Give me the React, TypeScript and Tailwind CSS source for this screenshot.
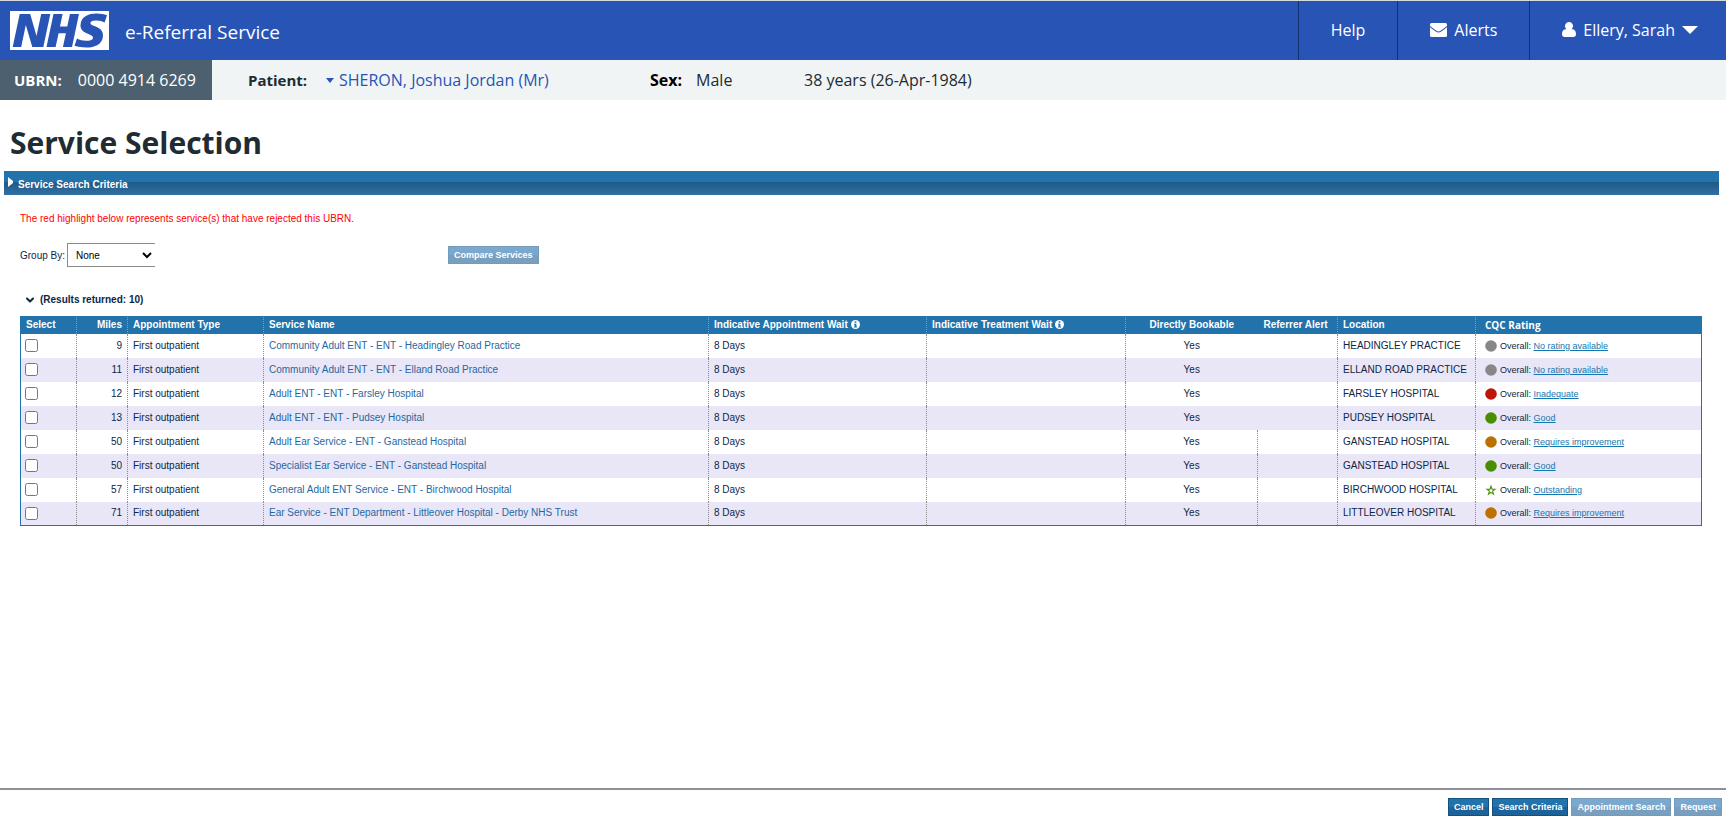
import { ChevronDown } from "lucide-react";

type Rating = "none" | "bad" | "good" | "improve" | "star";
type Row = { miles: number; name: string; location: string; rating: Rating };

const ratingLabels: Record<Rating, string> = {
  none: "No rating available",
  bad: "Inadequate",
  good: "Good",
  improve: "Requires improvement",
  star: "Outstanding",
};

const ratingColours: Record<Rating, string> = {
  none: "text-[#878787]",
  bad: "text-[#c01407]",
  good: "text-[#478f00]",
  improve: "text-[#bd7000]",
  star: "text-[#478f00]",
};

const rows: Row[] = [
  { miles: 9, name: "Community Adult ENT - ENT - Headingley Road Practice", location: "HEADINGLEY PRACTICE", rating: "none" },
  { miles: 11, name: "Community Adult ENT - ENT - Elland Road Practice", location: "ELLAND ROAD PRACTICE", rating: "none" },
  { miles: 12, name: "Adult ENT - ENT - Farsley Hospital", location: "FARSLEY HOSPITAL", rating: "bad" },
  { miles: 13, name: "Adult ENT - ENT - Pudsey Hospital", location: "PUDSEY HOSPITAL", rating: "good" },
  { miles: 50, name: "Adult Ear Service - ENT - Ganstead Hospital", location: "GANSTEAD HOSPITAL", rating: "improve" },
  { miles: 50, name: "Specialist Ear Service - ENT - Ganstead Hospital", location: "GANSTEAD HOSPITAL", rating: "good" },
  { miles: 57, name: "General Adult ENT Service - ENT - Birchwood Hospital", location: "BIRCHWOOD HOSPITAL", rating: "star" },
  { miles: 71, name: "Ear Service - ENT Department - Littleover Hospital - Derby NHS Trust", location: "LITTLEOVER HOSPITAL", rating: "improve" },
];

function RatingIcon({ rating }: { rating: Rating }) {
  return (
    <svg viewBox="0 0 12 12" className={`size-3 shrink-0 ${ratingColours[rating]}`} aria-hidden="true">
      {rating === "star" ? (
        <path
          d="M6 2.200 7 5.100 10 5.200 7.600 7.100 8.500 10.200 6 8.400 3.500 10.200 4.400 7.100 2 5.200 5 5.100Z"
          fill="none"
          stroke="currentColor"
          strokeWidth="1.1"
        />
      ) : (
        <circle cx="6" cy="6" r="5.8" fill="currentColor" />
      )}
    </svg>
  );
}

function InfoIcon() {
  return (
    <svg viewBox="0 0 10 10" className="ml-[3px] inline-block size-[9px] align-[-1px]" aria-hidden="true">
      <circle cx="5" cy="5" r="5" fill="#fff" />
      <path d="M4 1.500h2v1.600H4zM3.400 4.100H6v3.200h.7v1.100H3.300V7.300H4V5.200h-.6z" fill="#2272ab" />
    </svg>
  );
}

function EnvelopeIcon() {
  return (
    <svg viewBox="0 0 17 14" className="h-[14px] w-[17px]" aria-hidden="true">
      <rect width="17" height="14" rx="1.500" fill="currentColor" />
      <path d="M0 3.500C3 6 6.500 9 8.500 9S14 6 17 3.500" fill="none" stroke="#2854b5" strokeWidth="1.100" />
    </svg>
  );
}

function UserIcon() {
  return (
    <svg viewBox="0 0 14 15" className="h-[15px] w-[14px]" aria-hidden="true">
      <path
        d="M7 0a3.900 3.900 0 0 1 3.500 5.800c-.2.500-.5.900-.8 1.200C12.600 7 14 9.200 14 12c0 2-1 3-2.700 3H2.700C1 15 0 14 0 12 0 9.200 1.400 7 4.300 7c-.3-.3-.6-.7-.8-1.200A3.900 3.900 0 0 1 7 0Z"
        fill="currentColor"
      />
    </svg>
  );
}

function NhsLogo() {
  return (
    <span className="flex h-[39px] w-[99px] items-center justify-center overflow-hidden bg-white">
      <svg viewBox="0 0 99 39" className="h-[39px] w-[99px]" role="img" aria-label="NHS">
        <g fill="#2854b5">
          <path d="M9.700 3H20.200L26.500 25 31.200 3H40.300L33.300 36H22.300L15.800 14 11.200 36H2.700Z" />
          <path d="M43.500 3H52.600L50 15.500H57.300L59.900 3H69L62 36H52.900L55.900 22.300H48.600L45.600 36H36.500Z" />
          <path d="M97 4.300 94.600 11.500C92.500 10.400 89.500 9.600 86.500 9.600 83 9.600 80.500 10.200 80.500 12.200 80.500 15.700 93 14.700 93 24.200 93 33.500 84.500 36.500 76.500 36.500 72 36.500 68 35.900 64.500 34.800L67 27.600C69.500 29 73 29.800 76 29.800 79.500 29.800 83 29.200 83 26.500 83 22.500 70.500 23.300 70.500 14.500 70.500 5.500 78.500 2.500 86.500 2.500 90.500 2.500 94 3.200 97 4.300Z" />
        </g>
      </svg>
    </span>
  );
}

const head = "border-l border-dotted border-[#8f9aa5] px-[5px] font-bold";
const cell = "border-l border-dotted border-[#8c8c8c] px-[5px]";
const action = "h-[18px] border px-[5px] text-[9px] leading-4 font-bold text-white";
const strong = "border-[#15507f] bg-linear-to-b from-[#2272ab] from-50% to-[#1e629a] to-50%";
const faded = "border-[#759bb9] bg-linear-to-b from-[#7aa8cf] from-50% to-[#799fc0] to-50%";

export default function App() {
  return (
    <div className="flex min-h-screen flex-col bg-white font-['Liberation_Sans',Arial,sans-serif] text-[10px] text-[#0b2748]">
      <header className="flex h-[60px] border-t border-[#d5dce0] bg-[#2854b5] font-['Open_Sans','Noto_Sans',sans-serif] text-white">
        <div className="flex items-center gap-4 pl-[10px]">
          <NhsLogo />
          <span className="pt-1 text-[19px]">e-Referral Service</span>
        </div>
        <nav className="ml-auto flex text-base">
          <a href="#help" className="flex items-center border-l border-[#14306e] px-8 pb-[2px]">Help</a>
          <a href="#alerts" className="flex items-center gap-[7px] border-l border-[#14306e] px-8 pb-[2px]">
            <EnvelopeIcon />
            Alerts
          </a>
          <button type="button" className="flex items-center gap-[7px] border-l border-[#14306e] pr-7 pb-[2px] pl-8">
            <UserIcon />
            Ellery, Sarah
            <svg viewBox="0 0 16 8" className="h-2 w-4" aria-hidden="true">
              <path d="M0 0H16L8 8Z" fill="currentColor" />
            </svg>
          </button>
        </nav>
      </header>

      <section className="flex h-10 items-center bg-[#f0f4f5] font-['Open_Sans','Noto_Sans',sans-serif] text-base text-[#212b32]">
        <div className="flex h-full w-[212px] items-center gap-4 bg-[#4d6070] pl-[14px] text-white">
          <strong className="text-[15px]">UBRN:</strong>
          <span>0000 4914 6269</span>
        </div>
        <div className="flex w-[438px] items-center pl-9">
          <strong className="w-[78px] text-[15px]">Patient:</strong>
          <a href="#patient" className="flex items-center gap-[5px] text-[#2854b5]">
            <svg viewBox="0 0 8 5" className="h-[5px] w-2" aria-hidden="true">
              <path d="M0 0H8L4 5Z" fill="currentColor" />
            </svg>
            SHERON, Joshua Jordan (Mr)
          </a>
        </div>
        <div className="flex w-[154px] gap-[14px]">
          <strong className="text-black">Sex:</strong>
          <span>Male</span>
        </div>
        <span>38 years (26-Apr-1984)</span>
      </section>

      <main className="flex-1">
        <h1 className="px-[10px] pt-[23px] pb-2 font-['Open_Sans','Noto_Sans',sans-serif] text-3xl leading-10 font-bold text-[#212b32]">
          Service Selection
        </h1>
        <button
          type="button"
          className="mr-[7px] ml-1 flex h-6 w-[calc(100%-11px)] items-center gap-[5px] bg-linear-to-b from-[#2272ab] from-45% via-[#1e5a86] via-45% to-[#336fa3] px-1 pt-[2px] font-bold text-white"
        >
          <svg viewBox="0 0 5 10" className="mb-1 h-[10px] w-[5px]" aria-hidden="true">
            <path d="M0 0 5 4V6L0 10Z" fill="currentColor" />
          </svg>
          Service Search Criteria
        </button>

        <div className="pr-6 pl-5">
          <p className="pt-4 leading-4 text-[#ff0000]">
            The red highlight below represents service(s) that have rejected this UBRN.
          </p>
          <div className="flex items-center pt-4">
            <label htmlFor="group" className="w-[47px]">Group By:</label>
            <select
              id="group"
              className="h-6 w-[88px] border border-r-0 border-[#8a8a8a] bg-white px-1 text-black"
            >
              <option>None</option>
            </select>
            <button type="button" className={`ml-[293px] ${action} ${faded}`}>Compare Services</button>
          </div>
          <h2 className="flex items-center gap-1 px-1 pt-[25px] pb-2 leading-4 font-bold">
            <ChevronDown className="size-3" strokeWidth={4} />
            (Results returned: 10)
          </h2>

          <table className="w-full table-fixed border-collapse border border-[#2272ab] text-left">
            <colgroup>
              <col className="w-[56px]" />
              <col className="w-[51px]" />
              <col className="w-[136px]" />
              <col />
              <col className="w-[218px]" />
              <col className="w-[199px]" />
              <col className="w-[132px]" />
              <col className="w-[80px]" />
              <col className="w-[138px]" />
              <col className="w-[226px]" />
            </colgroup>
            <thead>
              <tr className="h-[17px] bg-[#2272ab] leading-4 text-white">
                <th className="px-[5px] font-bold">Select</th>
                <th className={`${head} text-right`}>Miles</th>
                <th className={head}>Appointment Type</th>
                <th className={head}>Service Name</th>
                <th className={head}>Indicative Appointment Wait<InfoIcon /></th>
                <th className={head}>Indicative Treatment Wait<InfoIcon /></th>
                <th className={`${head} text-center`}>Directly Bookable</th>
                <th className="px-[6px] font-bold whitespace-nowrap">Referrer Alert</th>
                <th className={head}>Location</th>
                <th className="border-l border-dotted border-[#8f9aa5] px-[9px] font-['Open_Sans','Noto_Sans',sans-serif] font-bold">
                  CQC Rating
                </th>
              </tr>
            </thead>
            <tbody>
              {rows.map((r, i) => (
                <tr key={r.name} className="h-6 leading-4 even:bg-[#e9e6f7]">
                  <td className="px-1">
                    <input type="checkbox" aria-label={r.name} className="block size-[13px]" />
                  </td>
                  <td className={`${cell} text-right`}>{r.miles}</td>
                  <td className={cell}>First outpatient</td>
                  <td className={cell}>
                    <a href={`#service-${i}`} className="text-[#1f68a3]">{r.name}</a>
                  </td>
                  <td className={cell}>8 Days</td>
                  <td className={cell} />
                  <td className={`${cell} text-center`}>Yes</td>
                  <td className={i > 3 ? cell : "px-[5px]"} />
                  <td className={`${cell} whitespace-nowrap`}>{r.location}</td>
                  <td className="border-l border-dotted border-[#8c8c8c] px-[9px] text-[9px]">
                    <span className="flex items-center gap-[3px]">
                      <RatingIcon rating={r.rating} />
                      <span>
                        Overall:{" "}
                        <a href={`#rating-${i}`} className="text-[#1477b0] underline">{ratingLabels[r.rating]}</a>
                      </span>
                    </span>
                  </td>
                </tr>
              ))}
            </tbody>
          </table>
        </div>
      </main>

      <footer className="flex justify-end gap-[3px] border-t-2 border-[#908f97] pt-2 pr-1 pb-[1px]">
        <button type="button" className={`${action} ${strong}`}>Cancel</button>
        <button type="button" className={`${action} ${strong}`}>Search Criteria</button>
        <button type="button" className={`${action} ${faded}`}>Appointment Search</button>
        <button type="button" className={`${action} ${faded}`}>Request</button>
      </footer>
    </div>
  );
}
